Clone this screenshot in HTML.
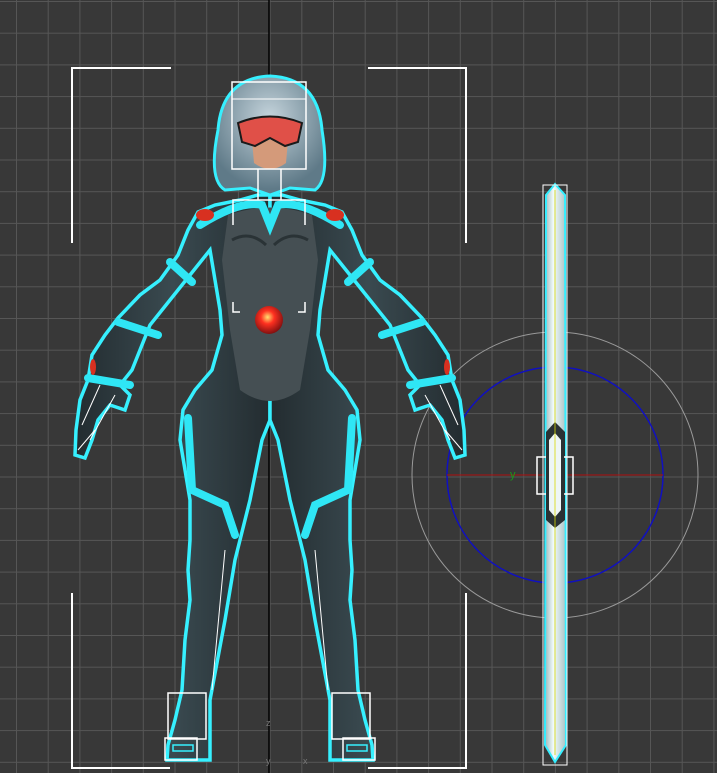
<!DOCTYPE html>
<html><head><style>
html,body{margin:0;padding:0;background:#383838;}
svg{display:block;}
</style></head><body>
<svg width="717" height="773" viewBox="0 0 717 773" xmlns="http://www.w3.org/2000/svg">
<defs>
<pattern id="g" x="16" y="1" width="31.7" height="31.7" patternUnits="userSpaceOnUse">
<path d="M0 0H31.7M0 0V31.7" stroke="#565656" stroke-width="2" fill="none"/>
</pattern>
<linearGradient id="body" x1="0" y1="0" x2="1" y2="0">
<stop offset="0" stop-color="#232c30"/><stop offset="0.5" stop-color="#3a4a50"/><stop offset="1" stop-color="#232c30"/>
</linearGradient>
<linearGradient id="staff" x1="0" y1="0" x2="1" y2="0">
<stop offset="0" stop-color="#9fb8bb"/><stop offset="0.4" stop-color="#f2fbfb"/><stop offset="1" stop-color="#a9c2c4"/>
</linearGradient>
<radialGradient id="hair" cx="0.5" cy="0.35" r="0.6">
<stop offset="0" stop-color="#c5d4dc"/><stop offset="1" stop-color="#5f7a88"/>
</radialGradient>
<radialGradient id="core" cx="0.45" cy="0.4" r="0.6">
<stop offset="0" stop-color="#ffe070"/><stop offset="0.4" stop-color="#ff3020"/><stop offset="1" stop-color="#801010"/>
</radialGradient>
<path id="half" d="M270 195 L258 195 L240 200 L215 205 L198 212 L188 230 L178 255 L160 280 L140 295 L118 318 L105 335 L92 355 L88 380 L80 400 L76 430 L75 455 L85 458 L92 440 L98 420 L110 405 L125 410 L130 395 L120 385 L132 370 L140 350 L150 325 L170 300 L190 275 L210 250 L215 280 L220 310 L222 335 L212 370 L195 390 L183 410 L180 440 L185 470 L190 500 L190 540 L188 570 L190 600 L185 640 L182 690 L175 720 L168 745 L167 760 L210 760 L210 700 L225 620 L235 560 L250 500 L262 440 L270 420 Z"/>
</defs>
<rect width="717" height="773" fill="#383838"/>
<rect width="717" height="773" fill="url(#g)"/>
<line x1="269" y1="0" x2="269" y2="773" stroke="#000" stroke-width="1.5"/>

<g stroke="#fff" stroke-width="2" fill="none">
<path d="M72 243V68H171"/><path d="M368 68H466V243"/>
<path d="M72 593V768H170"/><path d="M466 593V768H368"/>
</g>

<circle cx="555" cy="475" r="143" fill="none" stroke="#9a9a9a" stroke-width="1"/>
<circle cx="555" cy="475" r="108" fill="none" stroke="#1010c0" stroke-width="1.5"/>
<line x1="447" y1="475" x2="663" y2="475" stroke="#b01010" stroke-width="1"/>
<text x="510" y="478" fill="#1a9a1a" font-family="Liberation Sans, sans-serif" font-size="11">y</text>

<path d="M546 195 L555 184 L565 195 L566 745 L555 762 L545 745 Z" fill="url(#staff)" stroke="#35eeff" stroke-width="2"/>
<path d="M546 432 L555 422 L565 432 L565 520 L555 528 L546 520 Z" fill="#2a3234"/>
<path d="M549 440 L555 433 L561 440 L561 510 L555 517 L549 510 Z" fill="#eef6f6"/>
<line x1="555" y1="190" x2="555" y2="755" stroke="#d8d800" stroke-width="0.8"/>
<rect x="543" y="185" width="24" height="580" fill="none" stroke="#fff" stroke-width="1"/>
<path d="M546 457H537V494H546M564 457H573V494H564" stroke="#fff" stroke-width="1.5" fill="none"/>

<g>
<use href="#half" fill="url(#body)" stroke="#36f0ff" stroke-width="3.5"/>
<use href="#half" transform="translate(540,0) scale(-1,1)" fill="url(#body)" stroke="#36f0ff" stroke-width="3.5"/>
<path d="M228 215 Q270 200 312 215 L318 260 L310 330 L300 390 Q270 412 240 390 L230 330 L222 260 Z" fill="#454f53"/>
<path d="M232 240 Q250 230 266 245 M274 245 Q290 230 308 240" stroke="#2a3336" stroke-width="3" fill="none"/>
</g>
<g stroke="#2fe6f5" stroke-width="8" fill="none" stroke-linecap="round">
<path d="M170 262 L192 282"/><path d="M370 262 L348 282"/>
<path d="M118 322 L158 335"/><path d="M422 322 L382 335"/>
<path d="M88 378 L130 385"/><path d="M452 378 L410 385"/>
<path d="M188 418 L192 490 L225 505 L235 535"/><path d="M352 418 L348 490 L315 505 L305 535"/>
<path d="M200 225 Q240 200 262 205 L270 225 L278 205 Q300 200 340 225"/>
</g>
<g fill="#d83020">
<ellipse cx="205" cy="215" rx="9" ry="6"/><ellipse cx="335" cy="215" rx="9" ry="6"/>
<ellipse cx="93" cy="367" rx="3" ry="8"/><ellipse cx="447" cy="367" rx="3" ry="8"/>
</g>
<circle cx="269" cy="320" r="14" fill="url(#core)"/>

<g stroke="#fff" stroke-width="1" fill="none">
<path d="M82 425 L100 385 M90 440 L115 395 M78 450 L95 430"/>
<path d="M458 425 L440 385 M450 440 L425 395 M462 450 L445 430"/>
<path d="M225 550 L212 690 M315 550 L328 690"/>
</g>

<path d="M270 76 Q318 78 322 130 Q330 180 315 190 L290 188 L270 195 L250 188 L225 190 Q208 180 218 130 Q222 78 270 76 Z" fill="url(#hair)" stroke="#36f0ff" stroke-width="3"/>
<path d="M252 140 L288 140 L286 163 Q270 175 254 163 Z" fill="#d49a7a"/>
<path d="M238 123 Q270 110 302 123 L298 142 L285 146 L270 138 L255 146 L242 142 Z" fill="#e05048" stroke="#1a1a1a" stroke-width="2"/>
<rect x="232" y="82" width="74" height="87" fill="none" stroke="#fff" stroke-width="1.5"/>
<line x1="232" y1="99" x2="306" y2="99" stroke="#fff" stroke-width="1"/>
<path d="M258 169V200M281 169V200" stroke="#fff" stroke-width="1.5"/>
<path d="M233 225V200H305V225" stroke="#fff" stroke-width="1.5" fill="none"/>
<path d="M233 302V312H240M305 302V312H298" stroke="#fff" stroke-width="1.5" fill="none"/>

<g stroke="#fff" stroke-width="1.5" fill="none">
<rect x="168" y="693" width="38" height="46"/><rect x="165" y="738" width="32" height="22"/>
<rect x="332" y="693" width="38" height="46"/><rect x="343" y="738" width="32" height="22"/>
</g>
<g fill="none" stroke="#36f0ff" stroke-width="1.5"><rect x="173" y="745" width="20" height="6"/><rect x="347" y="745" width="20" height="6"/></g>
<text x="266" y="726" fill="#777" font-family="Liberation Sans, sans-serif" font-size="9">z</text>
<text x="266" y="764" fill="#777" font-family="Liberation Sans, sans-serif" font-size="9">y</text>
<text x="303" y="764" fill="#777" font-family="Liberation Sans, sans-serif" font-size="9">x</text>
</svg>
</body></html>
